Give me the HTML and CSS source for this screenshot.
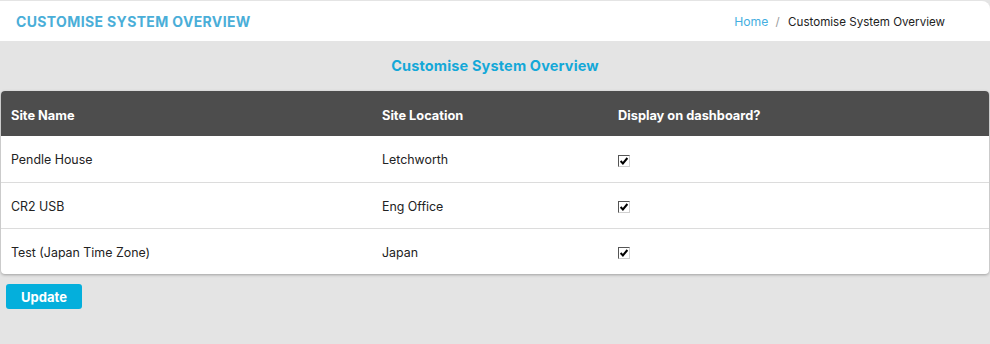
FILE: index.html
```html
<!doctype html>
<html lang="en">
<head>
    <meta charset="UTF-8">
    <title>Customise System Overview</title>
    <link rel="stylesheet" href="styles.css">
</head>
<body>
<div class="topbar">
    <h1 class="page-title">CUSTOMISE SYSTEM OVERVIEW</h1>
    <div class="breadcrumb">
        <a href="#" class="crumb-link">Home</a>
        <span class="crumb-sep">/</span>
        <span class="crumb-current">Customise System Overview</span>
    </div>
</div>

<div class="content">
    <h2 class="section-title">Customise System Overview</h2>
    <div class="card">
        <table class="site-table">
            <colgroup>
                <col class="col-name">
                <col class="col-location">
                <col>
            </colgroup>
            <thead>
            <tr>
                <th>Site Name</th>
                <th>Site Location</th>
                <th>Display on dashboard?</th>
            </tr>
            </thead>
            <tbody>
            <tr>
                <td>Pendle House</td>
                <td>Letchworth</td>
                <td><span class="check"><svg viewBox="0 0 10 10"><path d="M1.6 5 L3.9 7.4 L8.4 2" /></svg></span></td>
            </tr>
            <tr>
                <td>CR2 USB</td>
                <td>Eng Office</td>
                <td><span class="check"><svg viewBox="0 0 10 10"><path d="M1.6 5 L3.9 7.4 L8.4 2" /></svg></span></td>
            </tr>
            <tr>
                <td>Test (Japan Time Zone)</td>
                <td>Japan</td>
                <td><span class="check"><svg viewBox="0 0 10 10"><path d="M1.6 5 L3.9 7.4 L8.4 2" /></svg></span></td>
            </tr>
            </tbody>
        </table>
    </div>
    <button class="btn-update">Update</button>
</div>
</body>
</html>
```

FILE: styles.css
```css
body {
    margin: 0;
    background-color: #e4e4e4;
    font-family: Inter, "Open Sans", sans-serif;
    color: #222;
}
.topbar {
    display: flex;
    justify-content: space-between;
    align-items: center;
    height: 40px;
    margin-top: 1px;
    padding: 0 45px 0 16px;
    background-color: #fff;
    border-top-right-radius: 8px;
}
.page-title {
    margin: 0;
    padding-top: 1px;
    font-size: 14px;
    font-weight: 700;
    letter-spacing: 0.36px;
    color: #4aaed8;
}
.breadcrumb {
    font-size: 11.6px;
    padding-top: 1px;
}
.crumb-link {
    color: #45aee0;
    font-size: 12.2px;
    text-decoration: none;
}
.crumb-sep {
    color: #999;
    margin: 0 5px 0 4px;
}
.crumb-current {
    color: #222;
}
.content {
    padding: 0 1px;
}
.section-title {
    margin: 0;
    height: 50px;
    line-height: 50px;
    text-align: center;
    font-size: 14.5px;
    font-weight: 700;
    letter-spacing: 0.15px;
    color: #14a8d8;
}
.card {
    background-color: #fff;
    border-radius: 4px;
    box-shadow: 0 1px 3px rgba(0, 0, 0, 0.3);
    overflow: hidden;
}
.site-table {
    width: 100%;
    border-collapse: collapse;
    font-size: 12.4px;
}
.col-name {
    width: 371px;
}
.col-location {
    width: 236px;
}
.site-table th {
    height: 42px;
    padding: 3px 10px 0;
    text-align: left;
    background-color: #4d4d4d;
    color: #fff;
    font-size: 12.8px;
    font-weight: 700;
}
.site-table td {
    height: 44px;
    padding: 1px 10px 0;
    color: #222;
    border-top: 1px solid #dcdcdc;
}
.site-table tbody tr:first-child td {
    border-top: none;
    height: 45px;
}
.check {
    display: inline-block;
    width: 10px;
    height: 10px;
    border: 1px solid #555;
    border-right-color: #d0d0d0;
    border-bottom-color: #d0d0d0;
    background-color: #fff;
    vertical-align: middle;
}
.check svg {
    display: block;
    width: 10px;
    height: 10px;
    fill: none;
    stroke: #000;
    stroke-width: 2;
}
.btn-update {
    margin: 10px 0 0 5px;
    width: 76px;
    height: 25px;
    border: none;
    border-radius: 3px;
    background-color: #04afdc;
    color: #fff;
    font-family: inherit;
    font-size: 13px;
    font-weight: 700;
    cursor: pointer;
}
```
